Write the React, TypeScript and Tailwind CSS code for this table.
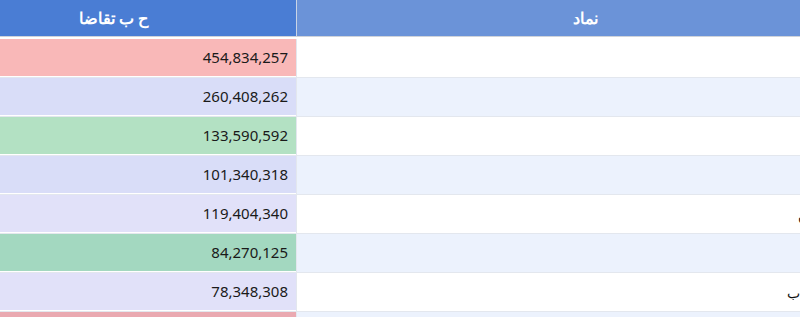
import React from 'react';

type Row = {
  symbol: string;
  demand: string;
  demandBg: string;
};

const ROWS: Row[] = [
  { symbol: 'فملی', demand: '454,834,257', demandBg: 'bg-[#f9b8b8]' },
  { symbol: 'شپنا', demand: '260,408,262', demandBg: 'bg-[#d9ddf8]' },
  { symbol: 'وبملت', demand: '133,590,592', demandBg: 'bg-[#b3e1c3]' },
  { symbol: 'خودرو', demand: '101,340,318', demandBg: 'bg-[#d9ddf8]' },
  { symbol: 'شستا تامین', demand: '119,404,340', demandBg: 'bg-[#e1e1f9]' },
  { symbol: 'فولاد', demand: '84,270,125', demandBg: 'bg-[#a3d8c0]' },
  { symbol: 'سیمان انقلاب', demand: '78,348,308', demandBg: 'bg-[#e1e1f9]' },
  { symbol: 'کگل', demand: '66,120,904', demandBg: 'bg-[#eaa9b1]' },
];

const App: React.FC = () => {
  return (
    <div className="w-[800px] h-[317px] overflow-hidden bg-white font-['Noto_Sans',sans-serif]">
      <div className="w-[873px] flex flex-col">
        {/* Header */}
        <div className="flex h-[37px] border-b border-[#cfd3da]">
          <div className="w-[296px] h-full bg-[#4a7dd4] flex items-center justify-start pr-[148px] text-white text-[16px] font-bold" dir="rtl">
            ح ب تقاضا
          </div>
          <div className="w-px h-full bg-[#c9d4e6]" />
          <div className="flex-1 h-full bg-[#6b93d8] flex items-center justify-center text-white text-[16px] font-bold" dir="rtl">
            نماد
          </div>
        </div>
        <div className="h-[2px] bg-white" />

        {/* Rows */}
        {ROWS.map((r, i) => (
          <div key={i} className="flex h-[39px] border-b border-[#e3e7ee]">
            <div className={`w-[296px] h-full ${r.demandBg} flex items-center justify-end pr-[8px] text-[15px] text-[#1a1a1a] border-b border-white`}>
              {r.demand}
            </div>
            <div className="w-px h-full bg-[#e3e7ee]" />
            <div
              className={`flex-1 h-full flex items-center justify-start pr-[8px] text-[14px] text-[#111] ${i % 2 === 0 ? 'bg-white' : 'bg-[#ecf2fd]'}`}
              dir="rtl"
            >
              {r.symbol}
            </div>
          </div>
        ))}
      </div>
    </div>
  );
};

export default App;
